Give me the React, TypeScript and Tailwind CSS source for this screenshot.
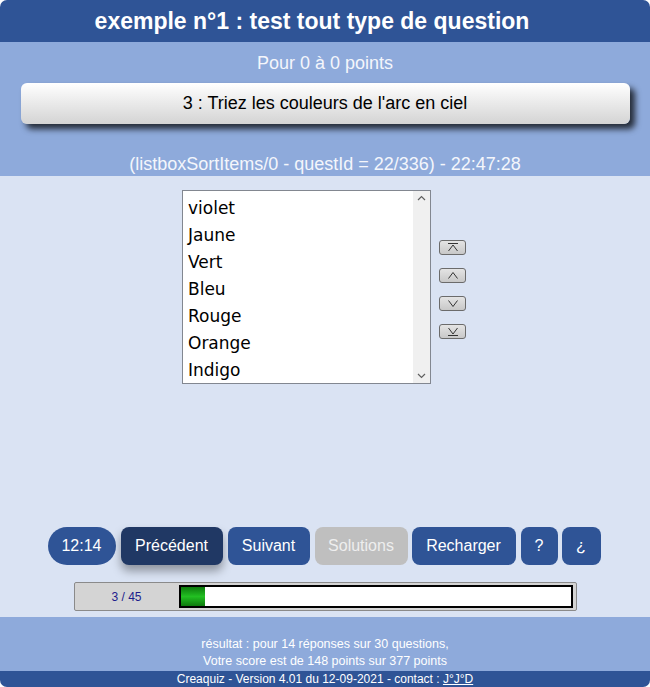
import React from "react";

const items = ["violet", "Jaune", "Vert", "Bleu", "Rouge", "Orange", "Indigo"];

function SmallBtn({ kind }: { kind: "top" | "up" | "down" | "bottom" }) {
  return (
    <div className="w-[27px] h-[15px] rounded-[3px] border border-[#6b6b6b] bg-gradient-to-b from-[#e4e4e4] to-[#c8c8c8] flex items-center justify-center">
      <svg width="14" height="11" viewBox="0 0 14 11" fill="none" stroke="#333" strokeWidth="1">
        {kind === "top" && (
          <>
            <line x1="2" y1="1.5" x2="12" y2="1.5" />
            <polyline points="2.5,9 7,3 11.5,9" />
          </>
        )}
        {kind === "up" && <polyline points="2.5,8.5 7,2.5 11.5,8.5" />}
        {kind === "down" && <polyline points="2.5,2.5 7,8.5 11.5,2.5" />}
        {kind === "bottom" && (
          <>
            <polyline points="2.5,2 7,8 11.5,2" />
            <line x1="2" y1="9.5" x2="12" y2="9.5" />
          </>
        )}
      </svg>
    </div>
  );
}

export default function App() {
  return (
    <div className="w-[650px] h-[687px] bg-white" style={{ fontFamily: '"Liberation Sans", Arial, sans-serif' }}>
      <div className="w-[650px] h-[687px] rounded-[7px] overflow-hidden flex flex-col">
        <div className="h-[42px] bg-[#2f5496] flex items-center justify-center pr-[26px] text-white font-bold text-[23px]">
          exemple n°1 : test tout type de question
        </div>
        <div className="h-[134px] bg-[#8eaadb] flex flex-col items-center">
          <div className="mt-[10px] text-[18px] leading-[22px] text-[#f4f6fb]">Pour 0 à 0 points</div>
          <div className="mt-[9px] w-[609px] h-[41px] rounded-[6px] bg-gradient-to-b from-[#ffffff] to-[#d4d4d4] shadow-[5px_5px_6px_rgba(0,0,0,0.75)] flex items-center justify-center text-[18px] text-black">
            3 : Triez les couleurs de l'arc en ciel
          </div>
          <div className="mt-[29px] text-[18px] leading-[22px] text-[#f4f6fb]">
            (listboxSortItems/0 - questId = 22/336) - 22:47:28
          </div>
        </div>
        <div className="h-[441px] bg-[#dae3f3] flex flex-col items-center">
          <div className="mt-[14px] ml-[-2px] flex items-center gap-[8px]">
            <div className="w-[249px] h-[194px] bg-white border border-[#828790] flex">
              <div className="flex-1 pt-[4px] pl-[5px]" style={{ fontFamily: '"DejaVu Sans", Verdana, sans-serif' }}>
                {items.map((it) => (
                  <div key={it} className="h-[27px] leading-[27px] text-[17px] text-black">
                    {it}
                  </div>
                ))}
              </div>
              <div className="w-[17px] bg-[#f0f0f0] flex flex-col justify-between items-center py-[4px]">
                <svg width="9" height="6" viewBox="0 0 9 6" fill="none" stroke="#606060" strokeWidth="1.2">
                  <polyline points="1,5 4.5,1.5 8,5" />
                </svg>
                <svg width="9" height="6" viewBox="0 0 9 6" fill="none" stroke="#606060" strokeWidth="1.2">
                  <polyline points="1,1 4.5,4.5 8,1" />
                </svg>
              </div>
            </div>
            <div className="flex flex-col gap-[13px] mt-[4px]">
              <SmallBtn kind="top" />
              <SmallBtn kind="up" />
              <SmallBtn kind="down" />
              <SmallBtn kind="bottom" />
            </div>
          </div>
          <div className="mt-[143px] mr-[2px] flex items-center gap-[5px] text-[16px] text-white">
            <div className="h-[38px] w-[68px] rounded-full bg-[#2f5496] flex items-center justify-center">12:14</div>
            <div className="h-[38px] w-[102px] rounded-[8px] bg-[#203864] shadow-[0_6px_10px_rgba(0,0,0,0.35)] flex items-center justify-center">Précédent</div>
            <div className="h-[38px] w-[82px] rounded-[8px] bg-[#2f5496] flex items-center justify-center">Suivant</div>
            <div className="h-[38px] w-[93px] rounded-[8px] bg-[#bfbfbf] text-[#eeeeee] flex items-center justify-center">Solutions</div>
            <div className="h-[38px] w-[104px] -ml-[1px] rounded-[8px] bg-[#2f5496] flex items-center justify-center">Recharger</div>
            <div className="h-[38px] w-[37px] rounded-[8px] bg-[#2f5496] flex items-center justify-center">?</div>
            <div className="h-[38px] w-[39px] -ml-[1px] rounded-[8px] bg-[#2f5496] flex items-center justify-center">¿</div>
          </div>
          <div className="mt-[17px] w-[503px] h-[29px] rounded-[2px] bg-[#d4d4d4] border border-[#8a8a8a] flex items-center">
            <div className="w-[104px] text-center text-[12px] text-[#1c1c8c]">3 / 45</div>
            <div className="w-[394px] h-[23px] bg-white border-2 border-black p-0">
              <div className="w-[24px] h-full bg-gradient-to-b from-[#0d7a0d] via-[#22c022] to-[#0d7a0d]" />
            </div>
          </div>
        </div>
        <div className="h-[54px] bg-[#8eaadb] flex flex-col items-center justify-end pb-[1px] text-[12.5px] leading-[17px] text-white">
          <div>résultat : pour 14 réponses sur 30 questions,</div>
          <div>Votre score est de 148 points sur 377 points</div>
        </div>
        <div className="h-[16px] bg-[#2f5496] flex items-center justify-center text-[12px] text-white leading-[16px]">
          Creaquiz - Version 4.01 du 12-09-2021 - contact :&nbsp;<span className="underline">J°J°D</span>
        </div>
      </div>
    </div>
  );
}
